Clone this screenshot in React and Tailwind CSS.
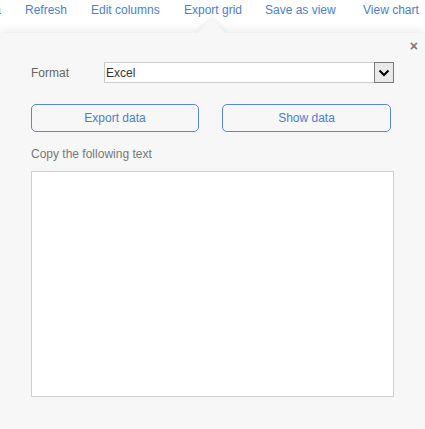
import React from "react";

export default function App() {
  const font = { fontFamily: '"Liberation Sans", Arial, sans-serif' };
  return (
    <div className="w-[425px] h-[429px] bg-white overflow-hidden relative" style={font}>
      <div className="h-[33px] flex items-start pt-[1px] text-[12px] text-[#4a7fd0] whitespace-nowrap">
        <span className="w-[25px] flex justify-end overflow-hidden"><span className="mr-[24px]">Data</span></span>
        <span className="w-[66px]">Refresh</span>
        <span className="w-[93px]">Edit columns</span>
        <span className="w-[81px]">Export grid</span>
        <span className="w-[98px]">Save as view</span>
        <span>View chart</span>
      </div>
      <div className="relative h-[396px] bg-[#f7f7f7] rounded-[4px] shadow-[0_-3px_8px_rgba(0,0,0,0.08)] px-[31px] pt-[29px]">
        <div className="absolute left-[201px] top-[-10px] w-[21px] h-[21px] rotate-45 bg-[#f7f7f7] shadow-[-2px_-2px_5px_rgba(0,0,0,0.06)]"></div>
        <div className="absolute left-[195px] top-0 w-[34px] h-[12px] bg-[#f7f7f7]"></div>
        <div className="absolute right-[7px] top-[6px] text-[#777] text-[14px] font-bold leading-none">×</div>
        <div className="relative flex items-center">
          <span className="w-[73px] text-[12px] text-[#666]">Format</span>
          <div className="w-[290px] h-[21px] bg-white border border-[#cccccc] flex items-center justify-between">
            <span className="pl-[1px] text-[12px] text-[#333]">Excel</span>
            <div className="w-[20px] h-[21px] -mr-[1px] bg-[#e9e9e9] border border-[#7a7a7a] flex items-center justify-center">
              <svg width="12" height="8" viewBox="0 0 12 8">
                <path d="M1.5 1.5 L6 6 L10.5 1.5" fill="none" stroke="#000" strokeWidth="2" />
              </svg>
            </div>
          </div>
        </div>
        <div className="relative flex gap-[23px] mt-[21px]">
          <button className="w-[168px] h-[28px] rounded-[5px] border border-[#5b87d6] text-[12px] text-[#4a7fd0] bg-[#f7f7f7]">Export data</button>
          <button className="w-[169px] h-[28px] rounded-[5px] border border-[#5b87d6] text-[12px] text-[#4a7fd0] bg-[#f7f7f7]">Show data</button>
        </div>
        <div className="relative mt-[15px] text-[12px] text-[#777] leading-[14px]">Copy the following text</div>
        <div className="relative mt-[10px] w-[363px] h-[226px] bg-white border border-[#cfcfcf]"></div>
      </div>
    </div>
  );
}
